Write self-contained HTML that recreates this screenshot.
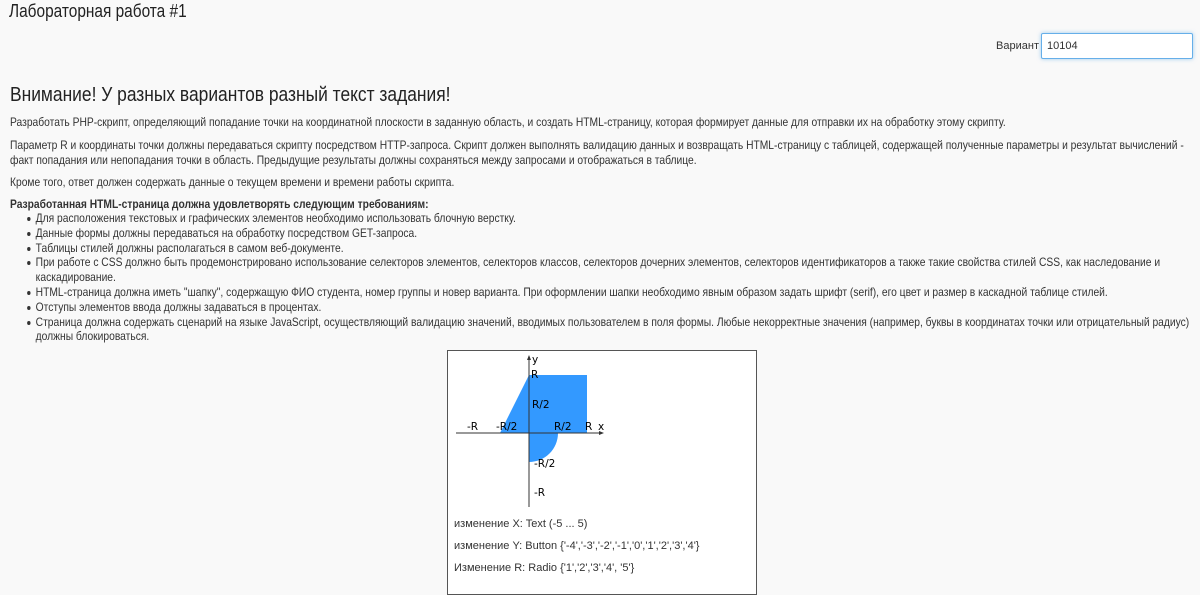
<!DOCTYPE html>
<html><head><meta charset="utf-8"><style>
*{box-sizing:border-box}
body{margin:0;background:#f9f9f9;color:#333;font-family:"Liberation Sans",Arial,sans-serif;font-size:12px;width:1200px;height:589px;overflow:hidden;position:relative}
.a{position:absolute;white-space:nowrap}
.s{transform:scaleX(.856);transform-origin:left top}
h1{position:absolute;left:9px;top:1px;margin:0;font-weight:normal;font-size:18px;color:#222;white-space:nowrap}
h2{position:absolute;left:10px;top:84px;margin:0;font-weight:normal;font-size:20px;color:#222;white-space:nowrap}
.t{line-height:14.5px}
ul{margin:0;padding:0;list-style:none}
li{position:relative;padding-left:30px;line-height:14.8px}
li:before{content:"";position:absolute;left:20px;top:6px;width:4px;height:4px;border-radius:2px;background:#333}
input{position:absolute;left:1041px;top:33px;width:152px;height:26px;border:1px solid #66afe9;box-shadow:0 0 4px rgba(102,175,233,.6);border-radius:2px;font-family:"Liberation Sans",sans-serif;font-size:11px;padding:0 5px;color:#333;background:#fff}
.box{position:absolute;left:447px;top:350px;width:310px;height:245px;border:1px solid #555;background:#fff}
</style></head><body>
<h1 class="s">Лабораторная работа #1</h1>
<div class="a" style="right:161px;top:40px;font-size:11px">Вариант</div>
<input value="10104">
<h2 class="s" style="transform:scaleX(.87)">Внимание! У разных вариантов разный текст задания!</h2>
<div class="a t s" style="left:10px;top:115px">Разработать PHP-скрипт, определяющий попадание точки на координатной плоскости в заданную область, и создать HTML-страницу, которая формирует данные для отправки их на обработку этому скрипту.</div>
<div class="a t s" style="left:10px;top:138px">Параметр R и координаты точки должны передаваться скрипту посредством HTTP-запроса. Скрипт должен выполнять валидацию данных и возвращать HTML-страницу с таблицей, содержащей полученные параметры и результат вычислений -<br>факт попадания или непопадания точки в область. Предыдущие результаты должны сохраняться между запросами и отображаться в таблице.</div>
<div class="a t s" style="left:10px;top:175px">Кроме того, ответ должен содержать данные о текущем времени и времени работы скрипта.</div>
<div class="a t s" style="left:10px;top:197px;font-weight:bold">Разработанная HTML-страница должна удовлетворять следующим требованиям:</div>
<ul class="a s" style="left:10px;top:211px">
<li>Для расположения текстовых и графических элементов необходимо использовать блочную верстку.</li>
<li>Данные формы должны передаваться на обработку посредством GET-запроса.</li>
<li>Таблицы стилей должны располагаться в самом веб-документе.</li>
<li>При работе с CSS должно быть продемонстрировано использование селекторов элементов, селекторов классов, селекторов дочерних элементов, селекторов идентификаторов а также такие свойства стилей CSS, как наследование и<br>каскадирование.</li>
<li>HTML-страница должна иметь "шапку", содержащую ФИО студента, номер группы и новер варианта. При оформлении шапки необходимо явным образом задать шрифт (serif), его цвет и размер в каскадной таблице стилей.</li>
<li>Отступы элементов ввода должны задаваться в процентах.</li>
<li>Страница должна содержать сценарий на языке JavaScript, осуществляющий валидацию значений, вводимых пользователем в поля формы. Любые некорректные значения (например, буквы в координатах точки или отрицательный радиус)<br>должны блокироваться.</li>
</ul>
<div class="box">
<svg width="310" height="160" style="position:absolute;left:0;top:0" font-family="DejaVu Sans,sans-serif" font-size="10.5" fill="#000">
<g transform="translate(-447,-350)">
<path d="M528 374 H586 V432 H528 Z" fill="#3399ff"/>
<path d="M499 432 L528 374 V432 Z" fill="#3399ff"/>
<path d="M528 432 H557 A29 29 0 0 1 528 461 Z" fill="#3399ff"/>
<line x1="455" y1="432" x2="601" y2="432" stroke="#333" stroke-width="1"/>
<line x1="528" y1="356" x2="528" y2="506" stroke="#333" stroke-width="1"/>
<path d="M598 430 L603 432 L598 434Z M526 359 L528 354 L530 359Z" fill="#333"/>
<text x="531" y="362">y</text><text x="597" y="429">x</text>
<text x="530" y="377">R</text><text x="531" y="407">R/2</text>
<text x="466" y="429">-R</text><text x="495" y="429">-R/2</text>
<text x="553" y="429">R/2</text><text x="584" y="429">R</text>
<text x="533" y="466">-R/2</text><text x="533" y="495">-R</text>
</g></svg>
<div class="a" style="left:6px;top:167px;font-size:11px">изменение X: Text (-5 ... 5)</div>
<div class="a" style="left:6px;top:189px;font-size:11px">изменение Y: Button {'-4','-3','-2','-1','0','1','2','3','4'}</div>
<div class="a" style="left:6px;top:211px;font-size:11px">Изменение R: Radio {'1','2','3','4', '5'}</div>
</div>
</body></html>
